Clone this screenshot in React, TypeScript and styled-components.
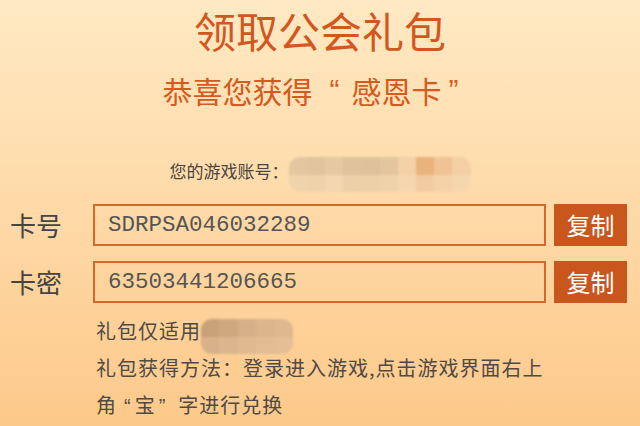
import React from "react";
import styled, { createGlobalStyle } from "styled-components";

const Global = createGlobalStyle`
  html, body { margin: 0; padding: 0; }
  body {
    width: 640px;
    height: 426px;
    overflow: hidden;
    font-family: "Noto Sans CJK SC", "Noto Sans", sans-serif;
  }
`;

const Page = styled.div`
  width: 640px;
  height: 426px;
  background: linear-gradient(180deg, #ffe9c3 0%, #fedbaa 45%, #fdc98a 100%);
  display: flex;
  flex-direction: column;
  align-items: stretch;
`;

const Title = styled.h1`
  margin: 0;
  height: 60px;
  line-height: 60px;
  text-align: center;
  font-size: 42px;
  font-weight: 400;
  color: #d2571f;
`;

const Subtitle = styled.h2`
  margin: 10px 0 0;
  height: 40px;
  line-height: 40px;
  display: flex;
  justify-content: center;
  font-size: 30px;
  font-weight: 400;
  color: #d45a20;
`;

const Quote = styled.span<{ $before: number; $after: number }>`
  display: inline-block;
  font-family: "Liberation Sans", Arial, sans-serif;
  letter-spacing: 0;
  margin-left: ${(p) => p.$before}px;
  margin-right: ${(p) => p.$after}px;
`;

const AccountRow = styled.div`
  margin-top: 43px;
  height: 36px;
  display: flex;
  justify-content: center;
  align-items: flex-start;
`;

const AccountLabel = styled.span`
  line-height: 36px;
  font-size: 17px;
  color: #4a4440;
`;

const Mosaic = styled.div<{ $w: number; $h: number; $mt: number; $cols: number }>`
  flex: none;
  width: ${(p) => p.$w}px;
  height: ${(p) => p.$h}px;
  margin-top: ${(p) => p.$mt}px;
  margin-bottom: ${(p) => -p.$mt}px;
  border-radius: 11px;
  overflow: hidden;
  display: grid;
  grid-template-columns: repeat(${(p) => p.$cols}, 1fr);
  grid-auto-rows: 1fr;
  filter: blur(1.2px);
`;

const Cell = styled.div<{ $c: string }>`
  background: ${(p) => p.$c};
`;

const Row = styled.div<{ $mt: number }>`
  margin-top: ${(p) => p.$mt}px;
  height: 42px;
  display: flex;
  align-items: center;
  padding-left: 10px;
`;

const Label = styled.div`
  width: 83px;
  font-size: 26px;
  line-height: 42px;
  color: #444;
`;

const Field = styled.div`
  box-sizing: border-box;
  width: 453px;
  height: 42px;
  border: 2px solid #d5692a;
  padding-left: 13px;
  display: flex;
  align-items: center;
  font-family: "Liberation Mono", "DejaVu Sans Mono", monospace;
  font-size: 22.5px;
  color: #555;
`;

const CopyButton = styled.button`
  margin-left: 8px;
  width: 73px;
  height: 42px;
  border: none;
  padding: 0;
  background: #c9561c;
  color: #fff;
  font-family: "Noto Sans CJK SC", sans-serif;
  font-size: 24px;
  line-height: 42px;
`;

const Notes = styled.div`
  margin: 9px 0 0 96px;
  width: 454px;
  font-size: 20px;
  letter-spacing: 1px;
  line-height: 37px;
  color: #4f4a45;
`;

const NoteLine = styled.div`
  display: flex;
  align-items: flex-start;
`;

const accountCells = [
  "#e4c6a0", "#e2c49d", "#e6c9a2", "#e1c39b", "#dfc29b", "#e3c59e", "#f4d1a7", "#eab27d", "#f0c394", "#f4cfa4",
  "#f1d3ab", "#efd2aa", "#f3d7b0", "#eed0a8", "#ecd0a8", "#f0d2aa", "#f6d6ae", "#f3cba0", "#f5d2a8", "#f6d6ad",
];

const gameCells = [
  "#c9a179", "#cfa87f", "#d6b088", "#dbb58c", "#deb88e",
  "#d8b189", "#dab58d", "#dfba91", "#e2bd93", "#e4bf95",
];

export default function App() {
  return (
    <>
      <Global />
      <Page>
        <Title>领取公会礼包</Title>
        <Subtitle>
          <span>恭喜您获得</span>
          <Quote $before={17} $after={12}>“</Quote>
          <span>感恩卡</span>
          <Quote $before={7} $after={19}>”</Quote>
        </Subtitle>
        <AccountRow>
          <AccountLabel>您的游戏账号：</AccountLabel>
          <Mosaic $w={182} $h={35} $mt={4} $cols={10}>
            {accountCells.map((c, i) => (
              <Cell key={i} $c={c} />
            ))}
          </Mosaic>
        </AccountRow>
        <Row $mt={15}>
          <Label>卡号</Label>
          <Field>SDRPSA046032289</Field>
          <CopyButton>复制</CopyButton>
        </Row>
        <Row $mt={15}>
          <Label>卡密</Label>
          <Field>63503441206665</Field>
          <CopyButton>复制</CopyButton>
        </Row>
        <Notes>
          <NoteLine>
            礼包仅适用
            <Mosaic $w={92} $h={35} $mt={7} $cols={5}>
              {gameCells.map((c, i) => (
                <Cell key={i} $c={c} />
              ))}
            </Mosaic>
          </NoteLine>
          礼包获得方法：登录进入游戏,点击游戏界面右上角
          <Quote $before={7} $after={4}>“</Quote>宝<Quote $before={3} $after={13}>”</Quote>字进行兑换
        </Notes>
      </Page>
    </>
  );
}
